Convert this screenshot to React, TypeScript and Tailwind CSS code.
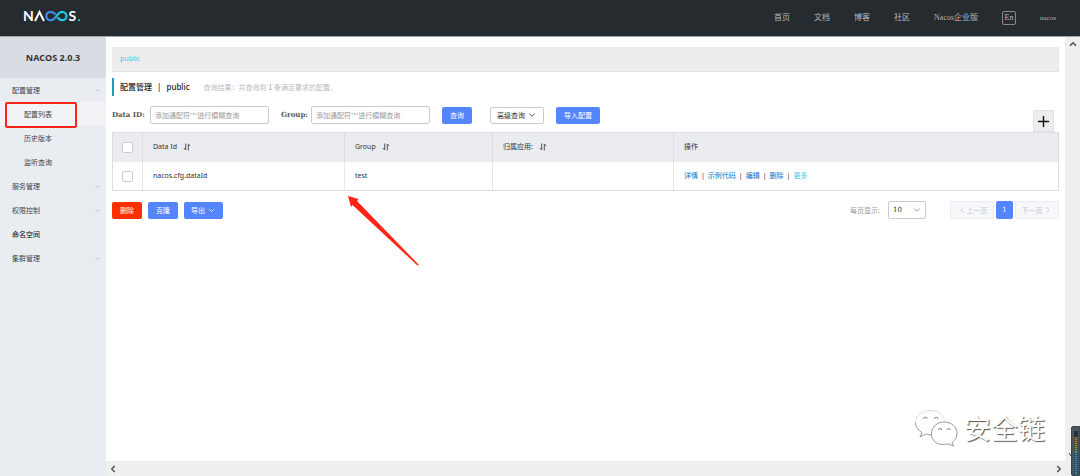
import { useState } from 'react'
import { ChevronDown, ChevronLeft, ChevronRight, ChevronUp, Plus } from 'lucide-react'

const navLinks = ['首页', '文档', '博客', '社区', 'Nacos企业版']

const menu = [
  { label: '配置管理', open: true, children: ['配置列表', '历史版本', '监听查询'] },
  { label: '服务管理', open: false, children: [] },
  { label: '权限控制', open: false, children: [] },
  { label: '命名空间', leaf: true, children: [] },
  { label: '集群管理', open: false, children: [] },
]

const rows = [{ dataId: 'nacos.cfg.dataId', group: 'test', app: '' }]

const actions = ['详情', '示例代码', '编辑', '删除']

const Logo = () => (
  <svg width="60" height="20" viewBox="0 -3 60 20" role="img" aria-label="Nacos" className="overflow-visible">
    <g fontFamily="Lato, sans-serif" fontWeight="700" fontSize="14" fill="#fff">
      <text x="-1" y="12">N</text>
      <text x="44.5" y="12">S</text>
    </g>
    <path d="M11 12 L15.500 3 L20 12" fill="none" stroke="#fff" strokeWidth="2" />
    <path d="M31.500 5.500 C30 3.500 28.500 2.800 26.500 2.800 A4.200 4.200 0 0 0 26.500 11.200 C28.500 11.200 30 10.300 31.500 8.500" fill="none" stroke="#3f8cf0" strokeWidth="2.200" />
    <path d="M31.500 8.500 C33.500 5.500 34.800 2.800 38.300 2.800 A4.200 4.200 0 0 1 38.300 11.200 C36 11.200 34.500 9.800 33.500 8.300" fill="none" stroke="#21c8e6" strokeWidth="2.200" />
    <circle cx="55" cy="11.200" r="1.100" fill="#21c8e6" />
  </svg>
)

const SortIcon = () => (
  <svg width="8" height="8" viewBox="0 0 8 8" fill="none" stroke="#555" strokeWidth="1" className="inline-block ml-1">
    <path d="M2.7 0.5 V7 L0.8 5" />
    <path d="M5.3 7.5 V1 L7.2 3" />
  </svg>
)

const Header = () => (
  <header className="h-9 shrink-0 bg-[#262b2f] flex items-center justify-between px-6">
    <a href="#home" className="flex -mt-1"><Logo /></a>
    <nav className="flex items-center gap-6 text-[8px] text-[#b4b7b9] font-['Liberation_Serif','Noto_Sans_CJK_SC',serif]">
      {navLinks.map((link) => (
        <a key={link} href="#nav" className="hover:text-white">{link}</a>
      ))}
      <button className="w-[14px] h-[14px] border border-[#85898c] rounded-xs flex items-center justify-center">En</button>
      <a href="#user" className="text-[7px]">nacos</a>
    </nav>
  </header>
)

const Sidebar = () => (
  <aside className="w-[106px] shrink-0 bg-[#e9edf1] text-[7px] text-[#444]">
    <h1 className="h-[41px] bg-[#d8dde3] flex items-center justify-center text-[9px] font-bold text-[#333] font-['Open_Sans',sans-serif]">
      NACOS 2.0.3
    </h1>
    <ul>
      {menu.map((item) => (
        <li key={item.label}>
          <a href="#menu" className={`h-6 pl-3 pr-[5px] flex items-center justify-between ${item.leaf ? 'text-black' : ''}`}>
            {item.label}
            {!item.leaf && (item.open
              ? <ChevronUp size={7} color="#999" />
              : <ChevronDown size={7} color="#999" />)}
          </a>
          <ul>
            {item.children.map((child, i) => (
              <li key={child} className="relative">
                <a href="#sub" className={`h-6 pl-6 flex items-center ${i === 0 ? 'bg-[#f2f3f7]' : ''}`}>{child}</a>
                {i === 0 && <span className="absolute left-[5px] top-0 w-[72px] h-[26px] border-2 border-[#ff2416] rounded-xs pointer-events-none" />}
              </li>
            ))}
          </ul>
        </li>
      ))}
    </ul>
  </aside>
)

const SearchBar = () => {
  const input = 'w-[119px] h-[18px] px-1 border border-[#c9ccd6] rounded-xs bg-white placeholder:text-[#999] outline-none'
  const label = "font-bold text-[#555] font-['DejaVu_Serif',serif]"
  return (
    <form className="mt-2.5 flex items-center text-[7px]" onSubmit={(e) => e.preventDefault()}>
      <label htmlFor="dataId" className={`w-[38px] ${label}`}>Data ID:</label>
      <input id="dataId" placeholder="添加通配符'*'进行模糊查询" className={input} />
      <label htmlFor="group" className={`ml-3 w-[30px] ${label}`}>Group:</label>
      <input id="group" placeholder="添加通配符'*'进行模糊查询" className={input} />
      <button className="ml-3 w-[30px] h-[17px] rounded-xs bg-[#5584ff] text-white">查询</button>
      <button type="button" className="ml-[18px] w-[54px] h-[17px] border border-[#c9ccd6] rounded-xs flex items-center justify-center gap-0.5 text-[#333]">
        高级查询 <ChevronDown size={10} strokeWidth={2} />
      </button>
      <button type="button" className="ml-3 w-11 h-[17px] rounded-xs bg-[#5584ff] text-white">导入配置</button>
    </form>
  )
}

const Check = ({ label }: { label: string }) => (
  <input
    type="checkbox"
    aria-label={label}
    className="block mx-auto appearance-none w-[11px] h-[11px] bg-white border border-[#c9ccd6] rounded-xs checked:bg-[#5584ff]"
  />
)

const ConfigTable = () => {
  const th = 'h-[29px] pl-2.5 text-left font-normal border-r border-[#dcdee3] last:border-r-0'
  const td = 'h-[28px] pl-2.5 border-r border-[#e6e7eb] last:border-r-0'
  return (
    <table className="w-full table-fixed border border-[#dcdee3] border-separate border-spacing-0 text-[7px] text-[#333] font-['Noto_Sans','Noto_Sans_CJK_SC',sans-serif]">
      <thead className="bg-[#ebecf0]">
        <tr>
          <th className="w-[30px] border-r border-[#dcdee3]"><Check label="全选" /></th>
          <th className={`w-[202px] ${th}`}>Data Id <SortIcon /></th>
          <th className={`w-[148px] ${th}`}>Group <SortIcon /></th>
          <th className={`w-[181px] ${th}`}>归属应用: <SortIcon /></th>
          <th className={th}>操作</th>
        </tr>
      </thead>
      <tbody>
        {rows.map((row) => (
          <tr key={row.dataId}>
            <td className="border-r border-[#e6e7eb]"><Check label={row.dataId} /></td>
            <td className={td}>{row.dataId}</td>
            <td className={td}>{row.group}</td>
            <td className={td}>{row.app}</td>
            <td className={td}>
              <div className="flex gap-[3px]">
                {actions.map((action) => (
                  <span key={action} className="flex gap-[3px]">
                    <a href="#action" className="text-[#0070cc]">{action}</a>|
                  </span>
                ))}
                <a href="#more" className="text-[#33cde5]">更多</a>
              </div>
            </td>
          </tr>
        ))}
      </tbody>
    </table>
  )
}

const Footer = () => {
  const [size, setSize] = useState('10')
  const pager = 'w-11 h-[18px] border border-[#e9ebf0] rounded-xs bg-[#f7f8fa] text-[#c4c6cc] flex items-center justify-center'
  return (
    <div className="mt-2.5 flex items-center justify-between text-[7px]">
      <div className="flex gap-1.5 text-white">
        <button className="w-[30px] h-[17px] rounded-xs bg-[#ff3000]">删除</button>
        <button className="w-[30px] h-[17px] rounded-xs bg-[#5584ff]">克隆</button>
        <button className="w-[39px] h-[17px] rounded-xs bg-[#5584ff] flex items-center justify-center gap-0.5">
          导出 <ChevronDown size={9} />
        </button>
      </div>
      <div className="flex items-center">
        <label htmlFor="size" className="text-[#999]">每页显示:</label>
        <div className="relative ml-2">
          <select id="size" value={size} onChange={(e) => setSize(e.target.value)}
          className="block appearance-none w-[38px] h-[18px] pl-1 border border-[#c9ccd6] rounded-xs bg-white text-[#333] font-['DejaVu_Serif',serif]">
            <option>10</option>
            <option>20</option>
            <option>50</option>
          </select>
          <ChevronDown size={10} color="#888" className="absolute right-1 top-1 pointer-events-none" />
        </div>
        <div className="ml-6 flex gap-0.5">
          <button className={pager}><ChevronLeft size={10} />上一页</button>
          <button className="w-[17px] h-[18px] rounded-xs bg-[#5584ff] text-white font-['DejaVu_Serif',serif]">1</button>
          <button className={pager}>下一页<ChevronRight size={10} /></button>
        </div>
      </div>
    </div>
  )
}

const Arrow = () => (
  <svg width="72" height="70" viewBox="0 0 72 70" className="absolute left-[347px] top-[196px] pointer-events-none">
    <path d="M1 0 L11.5 3 L10 5 L72 69 L70.5 69.5 L5.5 9 L4 11 Z" fill="#ff2416" />
  </svg>
)

const Watermark = () => (
  <div className="absolute right-[35px] bottom-[29px] flex items-center gap-1.5 pointer-events-none">
    <svg width="44" height="38" viewBox="0 0 44 38" fill="#fff" strokeWidth="1">
      <path d="M6 28 L8 23.5 C3.5 20.5 1.5 17 1.5 13.5 C1.5 6.500 8 1.500 16 1.500 C23.500 1.500 29 5.500 30.500 11.500" stroke="#ddd" />
      <path d="M1.5 13.5 C1.5 17 3.5 20.5 8 23.5 L6 28 L12 25 C14 25.600 16 26 18 26" stroke="#999" />
      <path d="M30 13 C37.500 13 43 18 43 24.500 C43 28 41.500 31 38 33.500 L39.500 37 L34 34.800 C24 37.500 17.500 32 17.500 25 C17.500 18 23 13 30 13 Z" stroke="#999" />
      <g fill="none" stroke="#888">
        <path d="M9.500 10 a1.800 1.800 0 0 1 3.600 0 M20.500 10 a1.800 1.800 0 0 1 3.600 0" />
        <path d="M24.500 21 a1.600 1.600 0 0 1 3.200 0 M33 21 a1.600 1.600 0 0 1 3.200 0" />
      </g>
    </svg>
    <span className="text-[27px] leading-8 text-white [text-shadow:1px_1px_1px_#555] font-['Noto_Sans_CJK_SC',sans-serif]">安全链</span>
  </div>
)

const Meter = () => (
  <div className="absolute right-0 bottom-0 w-[9px] h-[50px] rounded-l-xs bg-[#4a5560] border border-[#3b434b] flex justify-center py-1">
    <svg width="4" height="44" viewBox="0 0 4 44" className="overflow-visible">
      <rect width="4" height="44" fill="#22303a" />
      <path d="M2 6 V14" stroke="#b5762c" strokeWidth="3" strokeDasharray="1.500 0.500" />
      <path d="M2 14 V21" stroke="#7f9440" strokeWidth="3" strokeDasharray="1.500 0.500" />
      <path d="M2 21 V44" stroke="#2f8bb5" strokeWidth="3" strokeDasharray="1.500 0.500" />
      <path d="M-5 22 L-3 25 L-1 24" fill="none" stroke="#444" />
    </svg>
  </div>
)

const App = () => {
  return (
    <div className="relative h-screen flex flex-col overflow-hidden bg-white font-['Noto_Sans_CJK_SC',sans-serif]">
      <Header />
      <div className="flex-1 min-h-0 flex border-t border-[#a4a7a9]">
        <Sidebar />
        <div className="flex-1 min-w-0 flex flex-col">
          <div className="flex-1 min-h-0 flex">
            <main className="flex-1 min-w-0 px-1.5 pt-2.5">
              <div className="h-[25px] pl-2 bg-[#ededed] border-b border-[#e2e2e2] flex items-center text-[7px] text-[#33cde5] font-['Noto_Sans',sans-serif]">
                public
              </div>
              <div className="mt-1.5 h-[18px] pl-1.5 border-l-2 border-[#209bbf] flex items-center">
                <h2 className="flex gap-[5px] text-[8px] font-medium text-[#222] font-['Noto_Sans','Noto_Sans_CJK_SC',sans-serif]">
                  <span>配置管理</span><span>|</span><span>public</span>
                </h2>
                <p className="ml-3.5 text-[7px] text-[#bbb]">查询结果：共查询到 <b>1</b> 条满足要求的配置。</p>
              </div>
              <SearchBar />
              <div className="relative mt-2">
                <button aria-label="新建" className="absolute right-[5px] bottom-full w-[21px] h-[22px] bg-[#ededed] border border-[#e2e2e2] flex items-center justify-center">
                  <Plus size={17} strokeWidth={2} color="#111" className="shrink-0" />
                </button>
                <ConfigTable />
              </div>
              <Footer />
            </main>
            <div className="w-[15px] shrink-0 bg-[#efefef] pt-0.5 flex flex-col items-center">
              <ChevronUp size={10} strokeWidth={4} color="#555" />
            </div>
          </div>
          <div className="h-[15px] shrink-0 bg-[#efefef] flex items-center justify-between pl-0.5 pr-4">
            <ChevronLeft size={10} strokeWidth={4} color="#555" />
            <ChevronRight size={10} strokeWidth={4} color="#555" />
          </div>
        </div>
      </div>
      <Arrow />
      <Watermark />
      <Meter />
    </div>
  )
}

export default App
